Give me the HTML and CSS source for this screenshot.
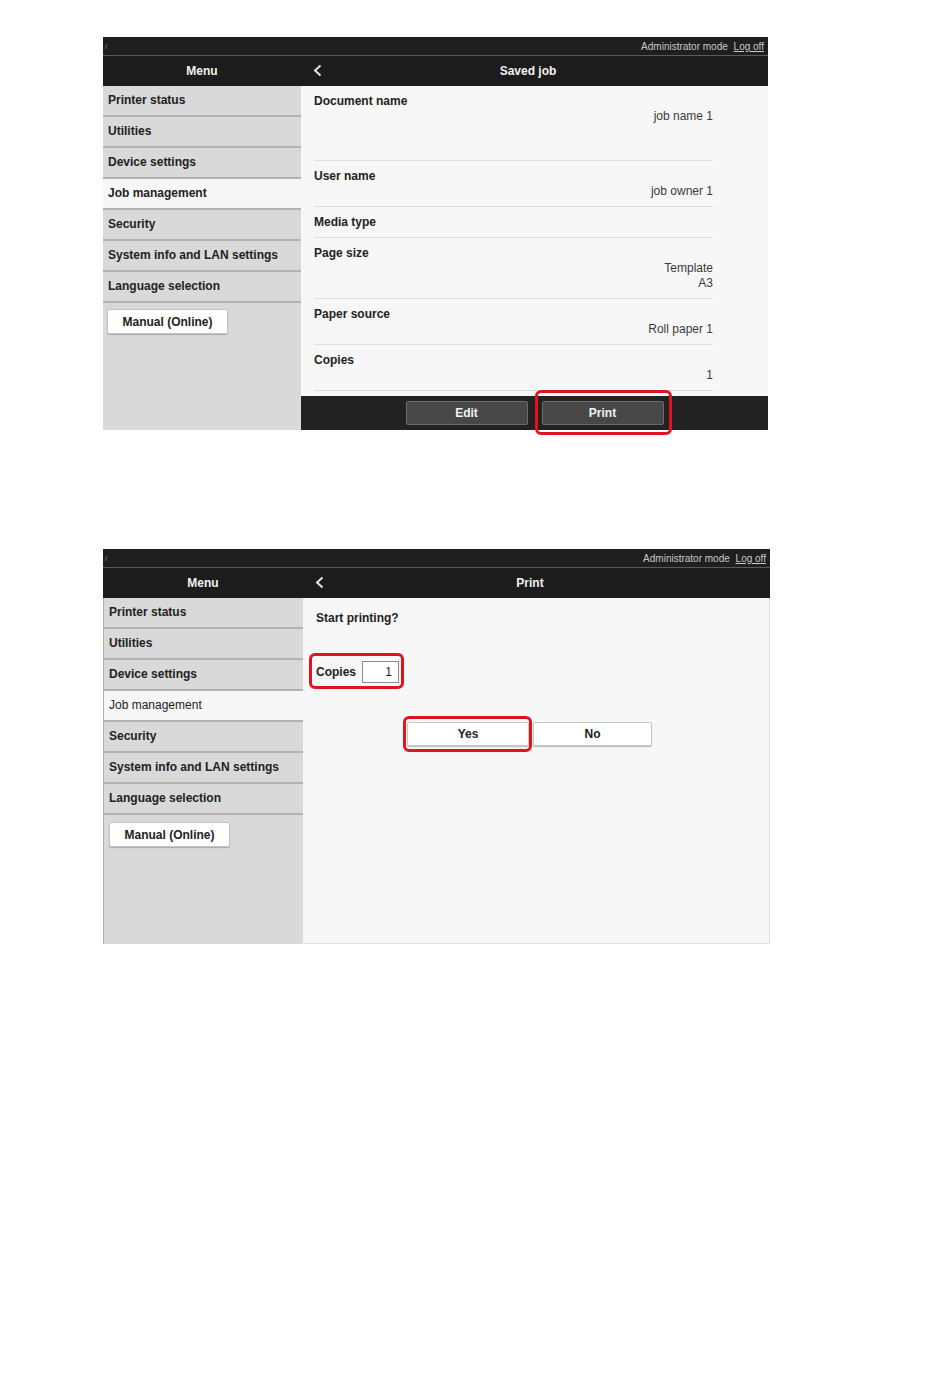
FILE: index.html
```html
<html>
<head>
<meta charset="UTF-8">
<title>Saved job - Print</title>
<link rel="stylesheet" href="styles.css">
</head>
<body>

<div class="shot shot-saved">
  <div class="topbar"><span class="path">/</span><span class="admin">Administrator mode <a href="#">Log off</a></span></div>
  <div class="head-menu">Menu</div>
  <div class="head-title">
    <svg class="back" width="9" height="13" viewBox="0 0 9 13"><polyline points="7.5,1.5 2,6.5 7.5,11.5" fill="none" stroke="#e8e8e8" stroke-width="2"/></svg>
    <span>Saved job</span>
  </div>
  <div class="side">
    <div class="item">Printer status</div>
    <div class="item">Utilities</div>
    <div class="item">Device settings</div>
    <div class="item sel">Job management</div>
    <div class="item">Security</div>
    <div class="item">System info and LAN settings</div>
    <div class="item">Language selection</div>
    <button class="manual">Manual (Online)</button>
  </div>
  <div class="content">
    <div class="rows">
      <div class="row"><div class="lbl">Document name</div><div class="val tall">job name 1</div></div>
      <div class="row"><div class="lbl">User name</div><div class="val">job owner 1</div></div>
      <div class="row"><div class="lbl">Media type</div></div>
      <div class="row"><div class="lbl">Page size</div><div class="val">Template<br>A3</div></div>
      <div class="row"><div class="lbl">Paper source</div><div class="val">Roll paper 1</div></div>
      <div class="row"><div class="lbl">Copies</div><div class="val">1</div></div>
    </div>
    <div class="actionbar">
      <button class="dark">Edit</button>
      <button class="dark hl hl-print">Print</button>
    </div>
  </div>
</div>

<div class="shot shot-print">
  <div class="topbar"><span class="path">/</span><span class="admin">Administrator mode <a href="#">Log off</a></span></div>
  <div class="head-menu">Menu</div>
  <div class="head-title">
    <svg class="back" width="9" height="13" viewBox="0 0 9 13"><polyline points="7.5,1.5 2,6.5 7.5,11.5" fill="none" stroke="#e8e8e8" stroke-width="2"/></svg>
    <span>Print</span>
  </div>
  <div class="side">
    <div class="item">Printer status</div>
    <div class="item">Utilities</div>
    <div class="item">Device settings</div>
    <div class="item sel plain">Job management</div>
    <div class="item">Security</div>
    <div class="item">System info and LAN settings</div>
    <div class="item">Language selection</div>
    <button class="manual">Manual (Online)</button>
  </div>
  <div class="content confirm">
    <div class="question">Start printing?</div>
    <div class="copies hl hl-copies">
      <span class="lbl">Copies</span>
      <span class="num">1</span>
    </div>
    <div class="answers">
      <button class="light hl hl-yes">Yes</button>
      <button class="light no">No</button>
    </div>
  </div>
</div>

</body>
</html>
```

FILE: styles.css
```css
html, body{
    margin:0;
    padding:0;
    background:#fff;
}
body{
    font-family:"Liberation Sans", Arial, sans-serif;
    font-size:12px;
    color:#222;
    width:950px;
    height:1397px;
}
button{
    font-family:"Liberation Sans", Arial, sans-serif;
    font-size:12px;
    font-weight:bold;
    cursor:pointer;
}

/* one screenshot of the remote UI */
.shot{
    display:grid;
    grid-template-rows:19px 30px 1fr;
    margin-left:103px;
}
.shot-saved{
    margin-top:37px;
    width:665px;
    height:393px;
    grid-template-columns:198px 1fr;
}
.shot-print{
    margin-top:119px;
    width:667px;
    height:395px;
    grid-template-columns:200px 1fr;
}

.topbar{
    grid-column:1 / 3;
    background:#1f1f1f;
    border-bottom:1px solid #5a5a5a;
    display:flex;
    justify-content:space-between;
    align-items:center;
    padding:0 4px 0 2px;
    font-size:10px;
    color:#c8c8c8;
}
.topbar .path{
    color:#888;
    font-size:8px;
}
.topbar a{
    color:#c8c8c8;
    margin-left:3px;
}

.head-menu, .head-title{
    background:#1c1c1c;
    color:#f2f2f2;
    font-weight:bold;
    display:flex;
    align-items:center;
}
.head-menu{
    justify-content:center;
}
.head-title{
    position:relative;
    justify-content:center;
    padding-right:13px;
}
.head-title .back{
    position:absolute;
    left:12px;
    top:8px;
}

/* side menu */
.side{
    background:#d9d9d9;
}
.shot-print .side{
    border-left:1px solid #b0b0b0;
}
.item{
    height:29px;
    line-height:29px;
    padding-left:5px;
    font-weight:bold;
    border-bottom:2px solid #b3b3b3;
    white-space:nowrap;
}
.item.sel{
    background:#f7f7f7;
}
.item.plain{
    font-weight:normal;
}
.manual{
    display:block;
    margin:6px 0 0 4px;
    width:121px;
    height:25px;
    background:#fff;
    color:#222;
    border:1px solid #c4c4c4;
    border-radius:2px;
    box-shadow:0 1px 1px #a8a8a8;
}
.shot-print .manual{
    margin:7px 0 0 5px;
}

/* detail list */
.content{
    background:#f7f7f7;
    display:flex;
    flex-direction:column;
}
.rows{
    padding:0 55px 0 13px;
}
.row{
    padding:8px 0 7px;
    border-bottom:1px solid #dddddd;
    line-height:15px;
}
.lbl{
    font-weight:bold;
}
.val{
    text-align:right;
    color:#3a3a3a;
}
.val.tall{
    height:44px;
}
.actionbar{
    margin-top:auto;
    height:34px;
    background:#222;
    display:flex;
    justify-content:center;
    align-items:center;
    gap:14px;
}
.dark{
    width:122px;
    height:24px;
    background:#474747;
    color:#f2f2f2;
    border:1px solid #6a6a6a;
    border-radius:2px;
}

/* confirmation */
.confirm{
    border-right:1px solid #e0e0e0;
    border-bottom:1px solid #e0e0e0;
    padding:13px 0 0 13px;
}
.question{
    font-weight:bold;
    line-height:15px;
}
.copies{
    display:flex;
    align-items:center;
    gap:6px;
    margin-top:35px;
    align-self:flex-start;
}
.copies .num{
    width:29px;
    height:20px;
    line-height:20px;
    border:1px solid #8a8a8a;
    background:#fff;
    text-align:right;
    padding-right:6px;
}
.answers{
    display:flex;
    gap:4px;
    margin:39px 0 0 91px;
}
.light{
    width:122px;
    height:24px;
    background:#fff;
    color:#222;
    border:1px solid #c8c8c8;
    border-radius:2px;
    box-shadow:0 1px 1px #b8b8b8;
}
.light.no{
    width:119px;
}

/* red call-out frames laid over the controls */
.hl{
    position:relative;
}
.hl::after{
    content:"";
    position:absolute;
    border:3px solid #e0141f;
    border-radius:6px;
    pointer-events:none;
}
.hl-print::after{
    inset:-12px -9px -11px -8px;
}
.hl-copies::after{
    inset:-8px -5px -6px -7px;
}
.hl-yes::after{
    inset:-7px -4px -7px -5px;
}
```
